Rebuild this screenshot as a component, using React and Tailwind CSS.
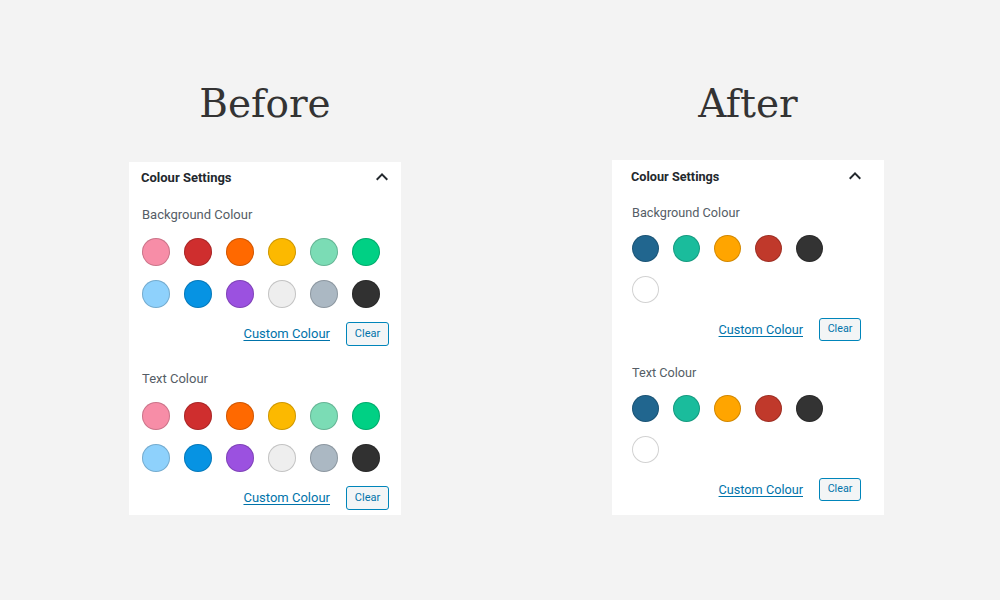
import React from "react";

const beforeColours = [
  ["#f78da7", "#cf2e2e", "#ff6900", "#fcb900", "#7bdcb5", "#00d084"],
  ["#8ed1fc", "#0693e3", "#9b51e0", "#eeeeee", "#abb8c3", "#313131"],
];

const afterColours = [
  ["#21668f", "#1abc9c", "#ffa500", "#c0392b", "#333333"],
  ["#ffffff"],
];

const Chevron = () => (
  <svg className="w-6 h-6 text-[#23282d]" viewBox="0 0 24 24" fill="currentColor">
    <path d="M12 8l-6 6 1.41 1.41L12 10.83l4.59 4.58L18 14z" />
  </svg>
);

const Swatch = ({ color, size }) => (
  <div
    className={`${size} rounded-full shadow-[inset_0_0_0_1px_rgba(0,0,0,0.18)]`}
    style={{ backgroundColor: color }}
  />
);

const Section = ({ label, rows, big, labelTop }) => (
  <div>
    <div
      className={`${labelTop} h-4 leading-4 text-[#555d66] ${big ? "text-[13px]" : "text-[12.7px]"}`}
    >
      {label}
    </div>
    <div className={`${big ? "mt-[15px] gap-[14px]" : "mt-[14px] gap-[14px]"} flex flex-col`}>
      {rows.map((row, i) => (
        <div key={i} className={`flex ${big ? "gap-[14px]" : "gap-[14px]"}`}>
          {row.map((c, j) => (
            <Swatch key={j} color={c} size={big ? "w-[28px] h-[28px]" : "w-[27px] h-[27px]"} />
          ))}
        </div>
      ))}
    </div>
    <div
      className={`flex items-center justify-end ${big ? "mt-[14px] gap-4" : "mt-[15px] gap-4"}`}
    >
      <a
        href="#"
        className={`underline underline-offset-2 text-[#0073aa] ${big ? "text-[13px]" : "text-[12.7px]"}`}
      >
        Custom Colour
      </a>
      <button
        className={`border border-[#0085ba] bg-[#f3f5f6] text-[#0073aa] rounded-[3px] ${
          big ? "w-[43px] h-[24px] text-[11px]" : "w-[42px] h-[23px] text-[10.7px]"
        }`}
      >
        Clear
      </button>
    </div>
  </div>
);

const App = () => {
  return (
    <div
      className="w-[1000px] h-[600px] bg-[#f3f3f3] flex"
      style={{ fontFamily: "Roboto, 'Liberation Sans', sans-serif" }}
    >
      {/* Before */}
      <div className="ml-[129px] w-[272px] pt-[80px]">
        <h1
          className="h-[48px] leading-[48px] text-center text-[39px] text-[#333]"
          style={{ fontFamily: "'DejaVu Serif', serif" }}
        >
          Before
        </h1>
        <div className="mt-[34px] bg-white h-[353px] pl-[13px] pr-[12px]">
          <div className="h-[32px] flex items-center justify-between">
            <span className="-ml-px text-[13px] font-bold text-[#23282d]">Colour Settings</span>
            <span className="mr-[-5px] mt-[-2px]">
              <Chevron />
            </span>
          </div>
          <Section label="Background Colour" rows={beforeColours} big labelTop="mt-[13px]" />
          <Section label="Text Colour" rows={beforeColours} big labelTop="mt-[25px]" />
        </div>
      </div>

      {/* After */}
      <div className="ml-[211px] w-[272px] pt-[80px]">
        <h1
          className="h-[48px] leading-[48px] text-center text-[39px] text-[#333]"
          style={{ fontFamily: "'DejaVu Serif', serif" }}
        >
          After
        </h1>
        <div className="mt-[32px] bg-white h-[355px] pl-[20px] pr-[23px]">
          <div className="h-[34px] flex items-center justify-between">
            <span className="-ml-px text-[12.7px] font-bold text-[#23282d]">Colour Settings</span>
            <span className="mr-[-6px] mt-[-2px]">
              <Chevron />
            </span>
          </div>
          <Section label="Background Colour" rows={afterColours} labelTop="mt-[11px]" />
          <Section label="Text Colour" rows={afterColours} labelTop="mt-[24px]" />
        </div>
      </div>
    </div>
  );
};

export default App;
